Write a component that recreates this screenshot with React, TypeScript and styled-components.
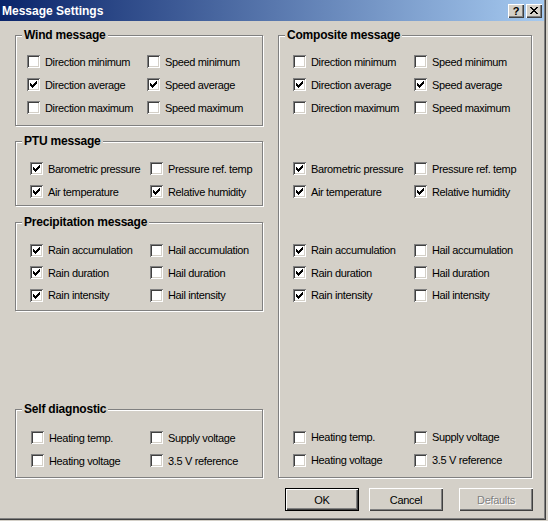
import React from 'react';
import styled, { createGlobalStyle } from 'styled-components';

const face = '#d4d0c8';
const shadow = '#808080';
const dark = '#404040';
const ui = '"Liberation Sans", Arial, sans-serif';

const GlobalStyle = createGlobalStyle`
  html, body {
    margin: 0;
    padding: 0;
    background: ${face};
  }
  body {
    font-family: ${ui};
    font-size: 11px;
    color: #000;
  }
`;

const Window = styled.div`
  width: 546px;
  height: 520px;
  box-sizing: border-box;
  border-right: 1px solid ${dark};
  border-bottom: 1px solid ${dark};
  box-shadow: inset -1px -1px 0 ${shadow};
  display: flex;
  flex-direction: column;
`;

const TitleBar = styled.div`
  height: 21px;
  margin-right: 1px;
  padding: 0 2px 0 2px;
  box-sizing: border-box;
  background: linear-gradient(to right, #0a246a, #a6caf0);
  display: flex;
  align-items: center;
`;

const TitleText = styled.div`
  flex: 1;
  align-self: flex-start;
  padding-top: 2px;
  line-height: 19px;
  font-weight: 700;
  font-size: 12px;
  color: #fff;
`;

const CaptionButton = styled.div<{ $gap?: number }>`
  width: 16px;
  height: 14px;
  margin-left: ${(p) => p.$gap ?? 0}px;
  box-sizing: border-box;
  background: ${face};
  box-shadow: inset 1px 1px 0 #fff, inset -1px -1px 0 ${dark}, inset -2px -2px 0 ${shadow};
  display: flex;
  align-items: center;
  justify-content: center;
  font-weight: 700;
  font-size: 11px;
  line-height: 14px;
  color: #000;
`;

const Body = styled.div`
  flex: 1;
  display: flex;
  flex-direction: column;
  padding: 14px 12px 0 15px;
`;

const Main = styled.div`
  display: flex;
  gap: 15px;
  height: 443px;
`;

const LeftColumn = styled.div`
  width: 248px;
  display: flex;
  flex-direction: column;
`;

const GroupBox = styled.div<{ $h: number; $mt?: number; $w?: number }>`
  box-sizing: border-box;
  height: ${(p) => p.$h}px;
  width: ${(p) => (p.$w ? `${p.$w}px` : 'auto')};
  margin-top: ${(p) => (p.$mt === undefined ? 0 : p.$mt)}px;
  border: 1px solid ${shadow};
  box-shadow: inset 1px 1px 0 #fff, 1px 1px 0 #fff;
  display: flex;
  flex-direction: column;
  &:last-child {
    margin-top: ${(p) => (p.$mt === undefined ? 'auto' : `${p.$mt}px`)};
  }
`;

const Caption = styled.div`
  align-self: flex-start;
  margin: -8px 0 0 6px;
  padding: 0 2px;
  background: ${face};
  font-weight: 700;
  font-size: 12px;
  line-height: 14px;
  letter-spacing: -0.2px;
`;

const CheckGrid = styled.div<{ $pt: number; $pl: number; $col: number; $pitch: number }>`
  display: grid;
  grid-template-columns: ${(p) => p.$col}px auto;
  grid-auto-rows: ${(p) => p.$pitch}px;
  padding: ${(p) => p.$pt}px 0 0 ${(p) => p.$pl}px;
`;

const CheckItem = styled.div`
  display: flex;
  align-items: center;
  white-space: nowrap;
  letter-spacing: -0.35px;
`;

const Box = styled.span`
  width: 13px;
  height: 13px;
  flex: none;
  box-sizing: border-box;
  padding: 3px;
  background: #fff;
  box-shadow: inset 1px 1px 0 ${shadow}, inset -1px -1px 0 #fff, inset 2px 2px 0 ${dark},
    inset -2px -2px 0 ${face};
  display: flex;
`;

const Label = styled.span`
  margin-left: 5px;
`;

const ButtonRow = styled.div`
  display: flex;
  justify-content: flex-end;
  margin-top: 10px;
`;

const PushButton = styled.button<{ $isDefault?: boolean; $gap?: number }>`
  width: 74px;
  height: 23px;
  margin: 0 0 0 ${(p) => p.$gap ?? 0}px;
  padding: 0;
  box-sizing: border-box;
  border: ${(p) => (p.$isDefault ? '1px solid #000' : 'none')};
  background: ${face};
  box-shadow: inset 1px 1px 0 #fff, inset -1px -1px 0 ${dark}, inset -2px -2px 0 ${shadow};
  font-family: ${ui};
  font-size: 11px;
  letter-spacing: -0.3px;
  color: #000;
  &:disabled {
    color: ${shadow};
    text-shadow: 1px 1px 0 #fff;
  }
`;

const CHECK =
  'M6 0h1v1h-1z M5 1h2v1h-2z M0 2h1v1h-1z M4 2h3v1h-3z M0 3h2v1h-2z M3 3h3v1h-3z M0 4h5v1h-5z M1 5h3v1h-3z M2 6h1v1h-1z';

const CLOSE =
  'M0 0h2v1h-2z M6 0h2v1h-2z M1 1h2v1h-2z M5 1h2v1h-2z M2 2h4v1h-4z M3 3h2v1h-2z M2 4h4v1h-4z M1 5h2v1h-2z M5 5h2v1h-2z M0 6h2v1h-2z M6 6h2v1h-2z';

type Item = { label: string; checked?: boolean };

const WIND: Item[] = [
  { label: 'Direction minimum' },
  { label: 'Speed minimum' },
  { label: 'Direction average', checked: true },
  { label: 'Speed average', checked: true },
  { label: 'Direction maximum' },
  { label: 'Speed maximum' },
];

const PTU: Item[] = [
  { label: 'Barometric pressure', checked: true },
  { label: 'Pressure ref. temp' },
  { label: 'Air temperature', checked: true },
  { label: 'Relative humidity', checked: true },
];

const PRECIP: Item[] = [
  { label: 'Rain accumulation', checked: true },
  { label: 'Hail accumulation' },
  { label: 'Rain duration', checked: true },
  { label: 'Hail duration' },
  { label: 'Rain intensity', checked: true },
  { label: 'Hail intensity' },
];

const SELF: Item[] = [
  { label: 'Heating temp.' },
  { label: 'Supply voltage' },
  { label: 'Heating voltage' },
  { label: '3.5 V reference' },
];

function Check({ item }: { item: Item }) {
  return (
    <CheckItem>
      <Box>
        {item.checked && (
          <svg width="7" height="7" viewBox="0 0 7 7" shapeRendering="crispEdges">
            <path d={CHECK} fill="#000" />
          </svg>
        )}
      </Box>
      <Label>{item.label}</Label>
    </CheckItem>
  );
}

function Checks({
  items,
  pt,
  pl,
  col,
  pitch = 23,
}: {
  items: Item[];
  pt: number;
  pl: number;
  col: number;
  pitch?: number;
}) {
  return (
    <CheckGrid $pt={pt} $pl={pl} $col={col} $pitch={pitch}>
      {items.map((it) => (
        <Check key={it.label} item={it} />
      ))}
    </CheckGrid>
  );
}

export default function App() {
  return (
    <>
      <GlobalStyle />
      <Window>
        <TitleBar>
          <TitleText>Message Settings</TitleText>
          <CaptionButton>?</CaptionButton>
          <CaptionButton $gap={2}>
            <svg width="8" height="7" viewBox="0 0 8 7" shapeRendering="crispEdges">
              <path d={CLOSE} fill="#000" />
            </svg>
          </CaptionButton>
        </TitleBar>
        <Body>
          <Main>
            <LeftColumn>
              <GroupBox $h={91}>
                <Caption>Wind message</Caption>
                <Checks items={WIND} pt={8} pl={11} col={120} />
              </GroupBox>
              <GroupBox $h={65} $mt={15}>
                <Caption>PTU message</Caption>
                <Checks items={PTU} pt={9} pl={14} col={120} />
              </GroupBox>
              <GroupBox $h={89} $mt={16}>
                <Caption>Precipitation message</Caption>
                <Checks items={PRECIP} pt={10} pl={14} col={120} pitch={22.5} />
              </GroupBox>
              <GroupBox $h={69}>
                <Caption>Self diagnostic</Caption>
                <Checks items={SELF} pt={10} pl={15} col={119} />
              </GroupBox>
            </LeftColumn>
            <GroupBox $h={443} $w={254} $mt={0}>
              <Caption>Composite message</Caption>
              <Checks items={WIND} pt={8} pl={14} col={121} />
              <Checks items={PTU} pt={38} pl={14} col={121} />
              <Checks items={PRECIP} pt={36} pl={14} col={121} pitch={22.5} />
              <Checks items={SELF} pt={119} pl={14} col={121} />
            </GroupBox>
          </Main>
          <ButtonRow>
            <PushButton $isDefault>OK</PushButton>
            <PushButton $gap={10}>Cancel</PushButton>
            <PushButton $gap={16} disabled>
              Defaults
            </PushButton>
          </ButtonRow>
        </Body>
      </Window>
    </>
  );
}
